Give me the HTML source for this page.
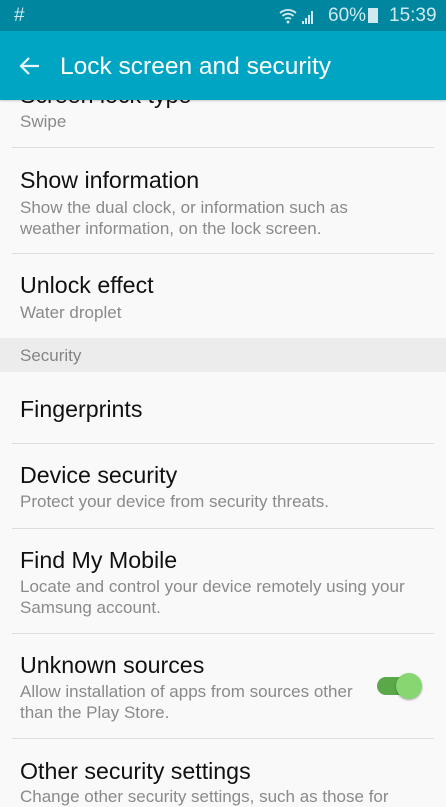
<!DOCTYPE html>
<html><head><meta charset="utf-8"><style>
body{margin:0;width:446px;height:793px;overflow:hidden;background:#f9f9f9;font-family:"Liberation Sans",sans-serif;position:relative}
.a{position:absolute;white-space:nowrap}
.t{left:20px;font-size:23.2px;color:#111;line-height:26px}
.s{left:20px;font-size:17px;color:#8a8a8a;line-height:21px}
.d{position:absolute;left:12px;width:422px;height:1px;background:#dedede}
</style></head><body>
<div class="a t" style="top:82px">Screen lock type</div>
<div class="a s" style="top:111px">Swipe</div>
<div class="d" style="top:147px"></div>
<div class="a t" style="top:167px">Show information</div>
<div class="a s" style="top:197px">Show the dual clock, or information such as<br>weather information, on the lock screen.</div>
<div class="d" style="top:253px"></div>
<div class="a t" style="top:272px">Unlock effect</div>
<div class="a s" style="top:302px">Water droplet</div>
<div class="a" style="left:0;top:338px;width:446px;height:34px;background:#ececec"></div>
<div class="a" style="left:20px;top:345px;font-size:17px;color:#858585;line-height:21px">Security</div>
<div class="a t" style="top:396px">Fingerprints</div>
<div class="d" style="top:443px"></div>
<div class="a t" style="top:462px">Device security</div>
<div class="a s" style="top:491px">Protect your device from security threats.</div>
<div class="d" style="top:528px"></div>
<div class="a t" style="top:547px">Find My Mobile</div>
<div class="a s" style="top:576px">Locate and control your device remotely using your<br>Samsung account.</div>
<div class="d" style="top:633px"></div>
<div class="a t" style="top:652px">Unknown sources</div>
<div class="a s" style="top:681px">Allow installation of apps from sources other<br>than the Play Store.</div>
<div class="a" style="left:377px;top:677px;width:34px;height:18px;border-radius:9px;background:#5aa84a"></div>
<div class="a" style="left:396px;top:673px;width:26px;height:26px;border-radius:50%;background:#86d672;box-shadow:0 1px 2px rgba(0,0,0,.35)"></div>
<div class="d" style="top:738px"></div>
<div class="a t" style="top:758px">Other security settings</div>
<div class="a s" style="top:786px">Change other security settings, such as those for</div>
<div class="a" style="left:0;top:0;width:446px;height:31px;background:#00869f"></div>
<div class="a" style="left:14px;top:5px;font-size:19px;color:#cfe9ee;line-height:22px">#</div>
<svg class="a" style="left:278px;top:6px" width="40" height="20" viewBox="0 0 40 20"><path d="M2 7a12 12 0 0 1 16 0M4.5 10a8 8 0 0 1 11 0M7 13a4.5 4.5 0 0 1 6 0" stroke="#cfe9ee" stroke-width="1.8" fill="none"/><circle cx="10" cy="16" r="1.5" fill="#cfe9ee"/><path d="M24 18h2v-3h-2zM27 18h2v-6h-2zM30 18h2v-9h-2zM33 18h2v-13h-2z" fill="#cfe9ee"/></svg>
<div class="a" style="left:328px;top:5px;font-size:19px;color:#cfe9ee;line-height:22px">60%</div>
<div class="a" style="left:368px;top:8px;width:10px;height:15px;background:#cfe9ee"></div>
<div class="a" style="left:389px;top:5px;font-size:19px;color:#cfe9ee;line-height:22px">15:39</div>
<div class="a" style="left:0;top:31px;width:446px;height:69px;background:#00a5c4;box-shadow:0 1px 2px rgba(0,0,0,.2)"></div>
<svg class="a" style="left:19px;top:56px" width="22" height="20" viewBox="0 0 22 20"><path d="M20 10H3M10 2L2 10l8 8" stroke="#e6f6f9" stroke-width="2.2" fill="none"/></svg>
<div class="a" style="left:60px;top:52px;font-size:24.5px;color:#fff;line-height:30px">Lock screen and security</div>
</body></html>
